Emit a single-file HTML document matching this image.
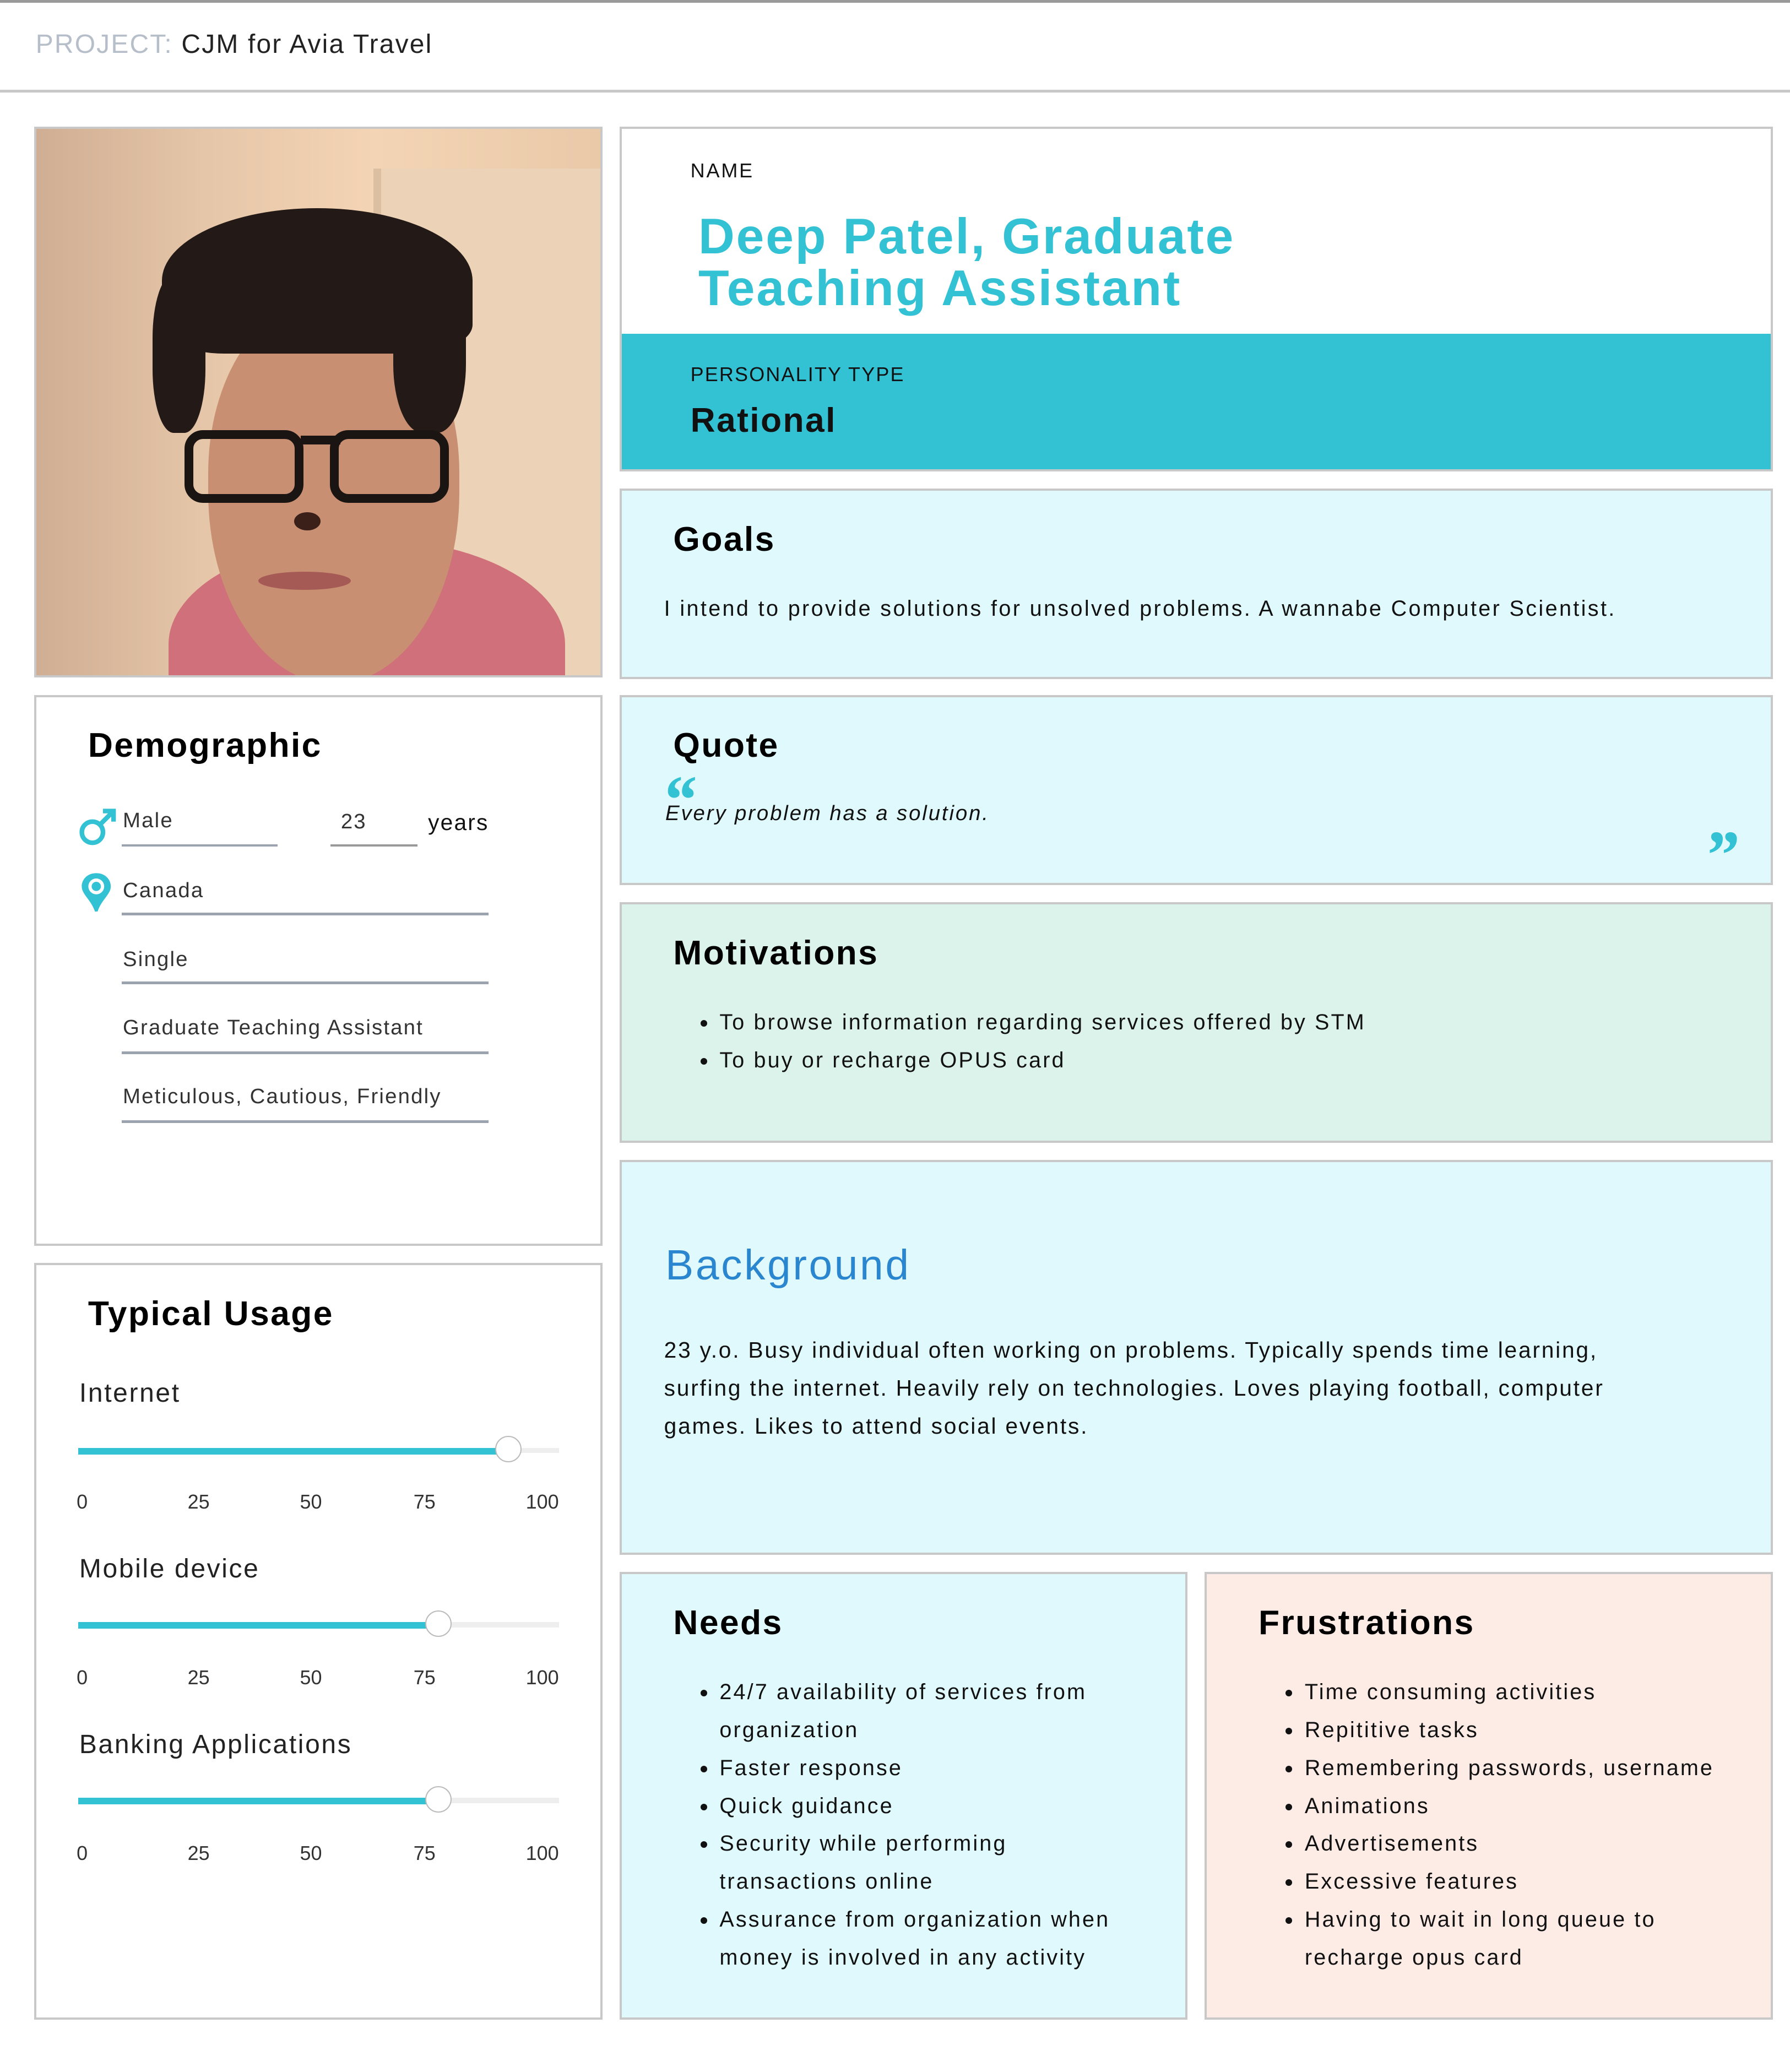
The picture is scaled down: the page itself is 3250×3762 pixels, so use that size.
<!DOCTYPE html>
<html><head><meta charset="utf-8"><style>
html,body{margin:0;padding:0;background:#fff;}
body{width:3250px;height:3762px;overflow:hidden;}
#w{zoom:2.3985;width:1355px;height:1568px;position:relative;font-family:"Liberation Sans",sans-serif;color:#222;}
.a{position:absolute;box-sizing:border-box;}
.card{position:absolute;box-sizing:border-box;border:2px solid #c8c8c8;}
h2{position:absolute;margin:0;font-size:26px;font-weight:bold;color:#000;letter-spacing:1px}
ul{position:absolute;margin:0;padding-left:22px;font-size:16.5px;line-height:28.7px;color:#111;letter-spacing:1.3px;}
li{padding-left:2px}
.fl{position:absolute;font-size:16px;color:#333;letter-spacing:0.9px}
.ln{position:absolute;height:2px;background:#9aa3ae;}
.lab{position:absolute;font-size:20px;color:#222;letter-spacing:1.1px}
.track{position:absolute;left:59px;width:364px;height:4px;background:#eee;}
.fill{position:absolute;left:0;top:0;height:5px;background:#33c1d4;}
.knob{position:absolute;top:-9px;width:20px;height:20px;border-radius:50%;background:#fff;border:1px solid #bbb;box-sizing:border-box;}
.sc{position:absolute;font-size:15px;color:#333;}
</style></head><body><div id="w">
<div class="a" style="left:0;top:0;width:1355px;height:2px;background:#999"></div>
<div class="a" style="left:27px;top:22px;font-size:20px;letter-spacing:0.9px"><span style="color:#b6bfc9">PROJECT:</span> <span style="color:#222">CJM for Avia Travel</span></div>
<div class="a" style="left:0;top:68px;width:1355px;height:2px;background:#c8c8c8"></div>

<div class="card" style="left:26px;top:96px;width:430px;height:417px;overflow:hidden;background:linear-gradient(90deg,#cfae93 0%,#e6c6a8 30%,#f3d4b4 60%,#e9c9a8 100%)">
<div class="a" style="left:255px;top:30px;width:180px;height:400px;background:#ecd2b7;border-left:6px solid #dcbfa1"></div>
<div class="a" style="left:100px;top:310px;width:300px;height:160px;border-radius:50% 50% 0 0;background:#d0707a"></div>
<div class="a" style="left:130px;top:130px;width:190px;height:290px;border-radius:45% 45% 50% 50%;background:#c98f72"></div>
<div class="a" style="left:95px;top:60px;width:235px;height:110px;border-radius:50% 50% 20% 20%;background:#231a17"></div>
<div class="a" style="left:88px;top:110px;width:40px;height:120px;border-radius:40%;background:#231a17"></div>
<div class="a" style="left:270px;top:100px;width:55px;height:130px;border-radius:40%;background:#231a17"></div>
<div class="a" style="left:112px;top:228px;width:90px;height:55px;border:7px solid #1a1412;border-radius:14px"></div>
<div class="a" style="left:222px;top:228px;width:90px;height:55px;border:7px solid #1a1412;border-radius:14px"></div>
<div class="a" style="left:200px;top:232px;width:30px;height:7px;background:#1a1412"></div>
<div class="a" style="left:195px;top:290px;width:20px;height:14px;border-radius:50%;background:#3a2018"></div>
<div class="a" style="left:168px;top:335px;width:70px;height:14px;border-radius:50%;background:#a65a55"></div>
</div>

<div class="card" style="left:26px;top:526px;width:430px;height:417px">
<h2 style="left:39px;top:22px">Demographic</h2>
</div>
<svg class="a" style="left:58px;top:610px" width="32" height="32" viewBox="0 0 32 32"><circle cx="12" cy="20" r="8" fill="none" stroke="#33c1d4" stroke-width="3.5"/><path d="M18 14 L27 5 M20 4 H28 V12" fill="none" stroke="#33c1d4" stroke-width="3.5"/></svg>
<svg class="a" style="left:61px;top:660px" width="24" height="32" viewBox="0 0 24 32"><path d="M12 1 C5 1 1 6 1 11 C1 17 8 21 11 30 H13 C16 21 23 17 23 11 C23 6 19 1 12 1Z" fill="#33c1d4"/><circle cx="12" cy="11" r="6" fill="#fff"/><circle cx="12" cy="11" r="3.5" fill="#33c1d4"/></svg>
<div class="fl" style="left:93px;top:612px">Male</div><div class="ln" style="left:92px;top:639px;width:118px"></div>
<div class="fl" style="left:258px;top:613px">23</div><div class="ln" style="left:250px;top:639px;width:66px;background:#999"></div>
<div class="fl" style="left:324px;top:613px;color:#111;font-size:17px">years</div>
<div class="fl" style="left:93px;top:665px">Canada</div><div class="ln" style="left:92px;top:691px;width:278px"></div>
<div class="fl" style="left:93px;top:717px">Single</div><div class="ln" style="left:92px;top:743px;width:278px"></div>
<div class="fl" style="left:93px;top:769px">Graduate Teaching Assistant</div><div class="ln" style="left:92px;top:796px;width:278px"></div>
<div class="fl" style="left:93px;top:821px">Meticulous, Cautious, Friendly</div><div class="ln" style="left:92px;top:848px;width:278px"></div>

<div class="card" style="left:26px;top:956px;width:430px;height:573px">
<h2 style="left:39px;top:22px">Typical Usage</h2>
</div>
<div class="lab" style="left:60px;top:1043px">Internet</div>
<div class="track" style="top:1096px"><div class="fill" style="width:326px"></div><div class="knob" style="left:316px"></div></div>
<div class="lab" style="left:60px;top:1176px">Mobile device</div>
<div class="track" style="top:1228px"><div class="fill" style="width:273px"></div><div class="knob" style="left:263px"></div></div>
<div class="lab" style="left:60px;top:1309px">Banking Applications</div>
<div class="track" style="top:1361px"><div class="fill" style="width:273px"></div><div class="knob" style="left:263px"></div></div>
<div class="sc" style="left:58px;top:1128px">0</div><div class="sc" style="left:142px;top:1128px">25</div><div class="sc" style="left:227px;top:1128px">50</div><div class="sc" style="left:313px;top:1128px">75</div><div class="sc" style="left:398px;top:1128px">100</div>
<div class="sc" style="left:58px;top:1261px">0</div><div class="sc" style="left:142px;top:1261px">25</div><div class="sc" style="left:227px;top:1261px">50</div><div class="sc" style="left:313px;top:1261px">75</div><div class="sc" style="left:398px;top:1261px">100</div>
<div class="sc" style="left:58px;top:1394px">0</div><div class="sc" style="left:142px;top:1394px">25</div><div class="sc" style="left:227px;top:1394px">50</div><div class="sc" style="left:313px;top:1394px">75</div><div class="sc" style="left:398px;top:1394px">100</div>

<div class="card" style="left:469px;top:96px;width:873px;height:261px;overflow:hidden">
<div class="a" style="left:0;top:155px;width:873px;height:106px;background:#33c1d4"></div>
<div class="a" style="left:52px;top:23px;font-size:15px;letter-spacing:1.2px;color:#111">NAME</div>
<div class="a" style="left:58px;top:62px;font-size:38px;line-height:39px;font-weight:bold;color:#33c1d4;letter-spacing:1.2px">Deep Patel, Graduate<br>Teaching Assistant</div>
<div class="a" style="left:52px;top:177px;font-size:15px;letter-spacing:0.9px;color:#111">PERSONALITY TYPE</div>
<div class="a" style="left:52px;top:206px;font-size:26px;font-weight:bold;color:#111;letter-spacing:1px">Rational</div>
</div>

<div class="card" style="left:469px;top:370px;width:873px;height:144px;background:#e0f9fc">
<h2 style="left:39px;top:22px">Goals</h2>
<div class="a" style="left:32px;top:80px;font-size:16.5px;letter-spacing:1.4px;color:#111">I intend to provide solutions for unsolved problems. A wannabe Computer Scientist.</div>
</div>

<div class="card" style="left:469px;top:526px;width:873px;height:144px;background:#e0f9fc">
<h2 style="left:39px;top:22px">Quote</h2>
<div class="a" style="left:30px;top:48px;font-size:52px;font-weight:bold;font-family:'Liberation Serif',serif;color:#33c1d4;font-style:italic">“</div>
<div class="a" style="left:33px;top:79px;font-size:16px;font-style:italic;color:#111;letter-spacing:1.2px">Every problem has a solution.</div>
<div class="a" style="left:819px;top:90px;font-size:52px;font-weight:bold;font-family:'Liberation Serif',serif;color:#33c1d4;font-style:italic">”</div>
</div>

<div class="card" style="left:469px;top:683px;width:873px;height:182px;background:#dcf3ec">
<h2 style="left:39px;top:22px">Motivations</h2>
<ul style="left:50px;top:75px"><li>To browse information regarding services offered by STM</li><li>To buy or recharge OPUS card</li></ul>
</div>

<div class="card" style="left:469px;top:878px;width:873px;height:299px;background:#e0f9fc">
<div class="a" style="left:33px;top:60px;font-size:32px;color:#2a86cf;letter-spacing:1.5px">Background</div>
<div class="a" style="left:32px;top:128px;width:760px;font-size:17px;line-height:28.7px;letter-spacing:1.15px;color:#111">23 y.o. Busy individual often working on problems. Typically spends time learning, surfing the internet. Heavily rely on technologies. Loves playing football, computer games. Likes to attend social events.</div>
</div>

<div class="card" style="left:469px;top:1190px;width:430px;height:339px;background:#e0f9fc">
<h2 style="left:39px;top:22px">Needs</h2>
<ul style="left:50px;top:75px;width:320px"><li>24/7 availability of services from organization</li><li>Faster response</li><li>Quick guidance</li><li>Security while performing transactions online</li><li>Assurance from organization when money is involved in any activity</li></ul>
</div>

<div class="card" style="left:912px;top:1190px;width:430px;height:339px;background:#fdebe6">
<h2 style="left:39px;top:22px">Frustrations</h2>
<ul style="left:50px;top:75px;width:320px"><li>Time consuming activities</li><li>Repititive tasks</li><li>Remembering passwords, username</li><li>Animations</li><li>Advertisements</li><li>Excessive features</li><li>Having to wait in long queue to recharge opus card</li></ul>
</div>
</div></body></html>
